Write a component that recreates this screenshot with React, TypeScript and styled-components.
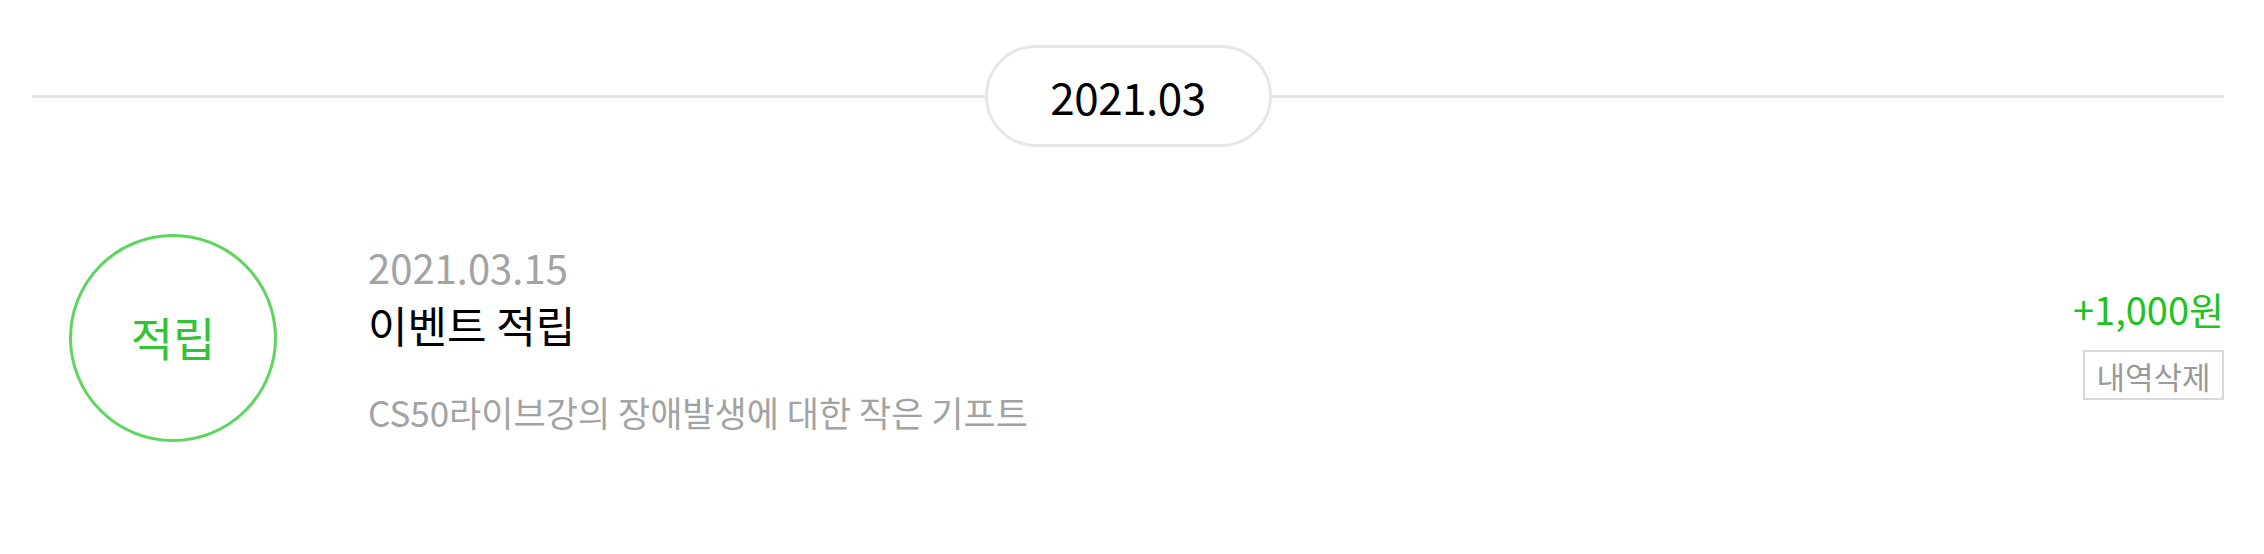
import React from "react";
import styled, { createGlobalStyle } from "styled-components";

const GlobalStyle = createGlobalStyle`
  html, body { margin: 0; padding: 0; background: #ffffff; }
  body { font-family: "Noto Sans CJK KR", "Noto Sans", sans-serif; }
`;

const Page = styled.div`
  width: 2264px;
  box-sizing: border-box;
  padding: 45px 40px 0 32px;
`;

const MonthHeader = styled.div`
  display: flex;
  align-items: center;
`;

const Rule = styled.div`
  flex: 1;
  height: 3px;
  background: #e6e6e6;
`;

const MonthPill = styled.div`
  width: 287px;
  height: 102px;
  box-sizing: border-box;
  border: 3px solid #e6e6e6;
  border-radius: 51px;
  display: flex;
  align-items: center;
  justify-content: center;
  font-size: 44px;
  color: #000;
  letter-spacing: -0.5px;
`;

const Entry = styled.div`
  display: flex;
  align-items: center;
  margin-top: 87px;
  padding-left: 37px;
`;

const Badge = styled.div<{ $color: string }>`
  width: 208px;
  height: 208px;
  box-sizing: border-box;
  border-radius: 50%;
  border: 3px solid ${(p) => p.$color};
  display: flex;
  align-items: center;
  justify-content: center;
  color: #33c433;
  font-size: 46px;
  line-height: 1;
  padding-bottom: 4px;
  flex-shrink: 0;
`;

const Info = styled.div`
  display: flex;
  flex-direction: column;
  margin-left: 91px;
  padding-top: 2px;
`;

const DateText = styled.div`
  font-size: 40px;
  line-height: 44px;
  color: #a3a3a3;
`;

const Title = styled.div`
  font-size: 43px;
  line-height: 52px;
  margin-top: 9px;
  color: #000;
`;

const Description = styled.div`
  font-size: 35px;
  line-height: 44px;
  margin-top: 40px;
  color: #a3a3a3;
`;

const Side = styled.div`
  margin-left: auto;
  display: flex;
  flex-direction: column;
  align-items: flex-end;
  padding-top: 12px;
`;

const Amount = styled.div`
  font-size: 38px;
  line-height: 42px;
  color: #1ec31e;
`;

const DeleteButton = styled.button`
  margin-top: 20px;
  width: 141px;
  height: 50px;
  box-sizing: border-box;
  border: 2px solid #d6d9dd;
  background: #fff;
  color: #9a9a9a;
  font-family: "Noto Sans CJK KR", "Noto Sans", sans-serif;
  font-size: 31px;
  padding: 0;
  display: flex;
  align-items: center;
  justify-content: center;
  cursor: pointer;
`;

export default function App() {
  return (
    <>
      <GlobalStyle />
      <Page>
        <MonthHeader>
          <Rule />
          <MonthPill>2021.03</MonthPill>
          <Rule />
        </MonthHeader>
        <Entry>
          <Badge $color="#5cd65c">적립</Badge>
          <Info>
            <DateText>2021.03.15</DateText>
            <Title>이벤트 적립</Title>
            <Description>CS50라이브강의 장애발생에 대한 작은 기프트</Description>
          </Info>
          <Side>
            <Amount>+1,000원</Amount>
            <DeleteButton>내역삭제</DeleteButton>
          </Side>
        </Entry>
      </Page>
    </>
  );
}
